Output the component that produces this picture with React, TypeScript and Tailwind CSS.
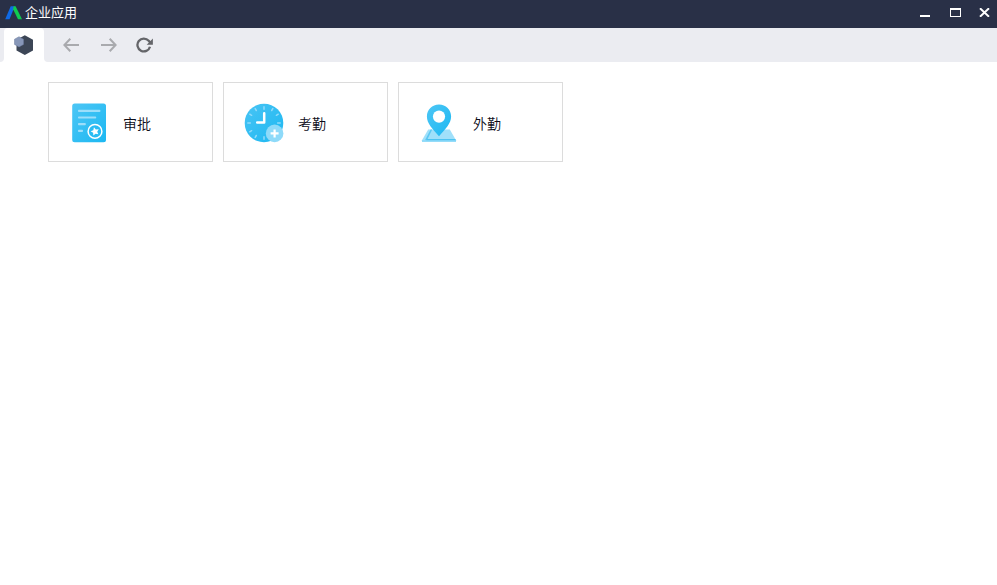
import type { ReactNode } from 'react'

type AppEntry = {
  id: string
  name: string
  icon: ReactNode
}

function Logo() {
  return (
    <svg width="18" height="14" viewBox="0 0 18 14" className="shrink-0">
      <path d="M5.7 0.3h4.1L4.5 13.3H0.2z" fill="#0f6ae6" />
      <path d="M8.6 0.3h2l6.4 13h-4L8.1 3.2z" fill="#10cb50" />
    </svg>
  )
}

function HomeIcon() {
  return (
    <svg width="20" height="22" viewBox="0 0 20 22">
      <path d="M10.8 1.2 19 5.8v10.6L10.8 21l-8.3-4.6V5.8z" fill="#3c4656" />
      <path d="M5 2.7 9.5 5.2v5.2L5 12.9.5 10.4V5.2z" fill="#8797b8" stroke="#6d7d9e" strokeWidth="0.5" />
    </svg>
  )
}

function BackIcon() {
  return (
    <svg width="16" height="14" viewBox="0 0 16 14" fill="none" stroke="#a9aaae" strokeWidth="2">
      <path d="M7.3 0.8 1.4 7l5.9 6.2M1.6 7H16" />
    </svg>
  )
}

function ForwardIcon() {
  return (
    <svg width="16" height="14" viewBox="0 0 16 14" fill="none" stroke="#a9aaae" strokeWidth="2">
      <path d="M8.7 0.8 14.6 7l-5.9 6.2M14.4 7H0" />
    </svg>
  )
}

function ReloadIcon() {
  return (
    <svg width="18" height="16" viewBox="0 0 18 16" fill="none">
      <path d="M14 9.7A6.4 6.4 0 1 1 12.7 3.8L14.6 6" stroke="#646569" strokeWidth="2.3" />
      <path d="M16.9 1.6v6.2h-6.2z" fill="#646569" />
    </svg>
  )
}

function ApprovalIcon() {
  return (
    <svg width="40" height="40" viewBox="0 0 40 40">
      <defs>
        <linearGradient id="doc" x1="0" y1="0" x2="1" y2="1">
          <stop offset="0" stopColor="#4dc6f5" />
          <stop offset="1" stopColor="#1cb8f2" />
        </linearGradient>
      </defs>
      <rect x="3.2" y="0.6" width="33.8" height="38.6" rx="2.5" fill="url(#doc)" />
      <g fill="#9cdefa">
        <rect x="9" y="6.8" width="22.4" height="2.2" rx="0.8" />
        <rect x="9" y="13.4" width="18.2" height="2.2" rx="0.8" />
        <rect x="9" y="20" width="7.8" height="2.2" rx="0.8" />
        <rect x="9" y="26.8" width="5" height="2.2" rx="0.8" />
      </g>
      <circle cx="26" cy="28.4" r="6.9" fill="#2abcf3" stroke="#fff" strokeWidth="1.5" />
      <path
        transform="translate(26 28.5) rotate(-14)"
        d="M0-4.4 1.3-1.7 4.2-1.4 2.1.7 2.6 3.6 0 2.2-2.6 3.6-2.1.7-4.2-1.4-1.3-1.7z"
        fill="#fff"
      />
    </svg>
  )
}

function AttendanceIcon() {
  return (
    <svg width="40" height="40" viewBox="0 0 40 40">
      <defs>
        <linearGradient id="clock" x1="0" y1="0" x2="1" y2="1">
          <stop offset="0" stopColor="#49c4f4" />
          <stop offset="1" stopColor="#1cb8f2" />
        </linearGradient>
      </defs>
      <circle cx="20" cy="20" r="19.3" fill="url(#clock)" />
      <g stroke="#90dafa" strokeWidth="1.5" strokeLinecap="round">
        <path d="M20 3.8v2.4M20 33.8v2.4M3.8 20h2.6M33.6 20h2.6" />
        <path d="m11.2 5.6 1.1 1.9M28.8 5.6l-1.1 1.9M5.8 11.2l1.8 1.1M34.2 11.2l-1.8 1.1M5.8 28.8l1.8-1.1M11.2 34.4l1.1-1.9" />
      </g>
      <path d="M20.2 10.2v9.3h-7" fill="none" stroke="#fff" strokeWidth="2.5" strokeLinecap="round" strokeLinejoin="round" />
      <circle cx="30.6" cy="30.4" r="8.8" fill="#8edaf9" />
      <path d="M30.6 26.4v8M26.6 30.4h8" stroke="#fff" strokeWidth="2.2" />
    </svg>
  )
}

function FieldworkIcon() {
  return (
    <svg width="40" height="40" viewBox="0 0 40 40">
      <defs>
        <linearGradient id="pin" x1="0" y1="0" x2="1" y2="1">
          <stop offset="0" stopColor="#4dc6f5" />
          <stop offset="1" stopColor="#1cb8f2" />
        </linearGradient>
      </defs>
      <path d="M9.2 26.6h21.6L37 37.2v1.6H3v-1.6z" fill="#a0e0fa" />
      <path d="M11.6 26.6h1.6L8 37.2H6z" fill="#5cc8f4" />
      <path d="M3 37.3h34v1.5H3z" fill="#8ad9f9" />
      <path d="M8 36h28.3l.7 1.2H7.4z" fill="#4cc3f2" />
      <path
        d="M20 1.6c6.9 0 12.1 5.2 12.1 11.9 0 7.2-5.5 12-12.1 19.7C13.4 25.5 7.9 20.7 7.9 13.5 7.9 6.8 13.1 1.6 20 1.6z"
        fill="url(#pin)"
      />
      <circle cx="20" cy="13.6" r="6.1" fill="#fff" />
    </svg>
  )
}

const APPS: AppEntry[] = [
  { id: 'approval', name: '审批', icon: <ApprovalIcon /> },
  { id: 'attendance', name: '考勤', icon: <AttendanceIcon /> },
  { id: 'fieldwork', name: '外勤', icon: <FieldworkIcon /> },
]

export default function App() {
  return (
    <div className="flex h-screen flex-col overflow-hidden bg-white font-['Noto_Sans_CJK_SC',sans-serif]">
      {/* Title bar */}
      <header className="flex h-7 shrink-0 items-center justify-between bg-[#293047] pl-[5px] pr-[7px]">
        <div className="flex items-center gap-0.5 pb-0.5">
          <Logo />
          <h1 className="pb-0.5 text-[13px] leading-5 font-normal text-white">企业应用</h1>
        </div>
        <div className="flex items-center pb-[3px] text-white">
          <button aria-label="minimize" className="mr-5 flex h-[9px] w-2.5 items-end">
            <span className="h-0.5 w-full bg-white" />
          </button>
          <button aria-label="maximize" className="mr-[18px] h-[9px] w-[11px] border border-t-2 border-white" />
          <button aria-label="close">
            <svg width="11" height="9" viewBox="0 0 11 9" stroke="currentColor" strokeWidth="1.9">
              <path d="M1 0.2 10 8.8M10 0.2 1 8.8" />
            </svg>
          </button>
        </div>
      </header>

      {/* Tab and navigation */}
      <nav className="flex h-[34px] shrink-0 items-center bg-[#ebecf1]">
        <div className="h-full w-1 bg-white">
          <div className="h-full rounded-br bg-[#ebecf1]" />
        </div>
        <div className="h-full w-10">
          <div className="flex h-full items-center justify-center rounded-t bg-white">
            <HomeIcon />
          </div>
        </div>
        <div className="h-full w-1 bg-white">
          <div className="h-full rounded-bl bg-[#ebecf1]" />
        </div>
        <button aria-label="back" className="ml-[15px]"><BackIcon /></button>
        <button aria-label="forward" className="ml-[22px]"><ForwardIcon /></button>
        <button aria-label="reload" className="ml-[19px]"><ReloadIcon /></button>
      </nav>

      {/* App grid */}
      <main className="flex gap-2.5 px-12 pt-5">
        {APPS.map(app => (
          <button
            key={app.id}
            className="flex h-20 w-[165px] items-center border border-[#dcdcdc] bg-white pt-0.5 pl-5"
          >
            {app.icon}
            <span className="ml-3.5 pb-px text-sm font-[350] text-[#0c0c18]">{app.name}</span>
          </button>
        ))}
      </main>
    </div>
  )
}
